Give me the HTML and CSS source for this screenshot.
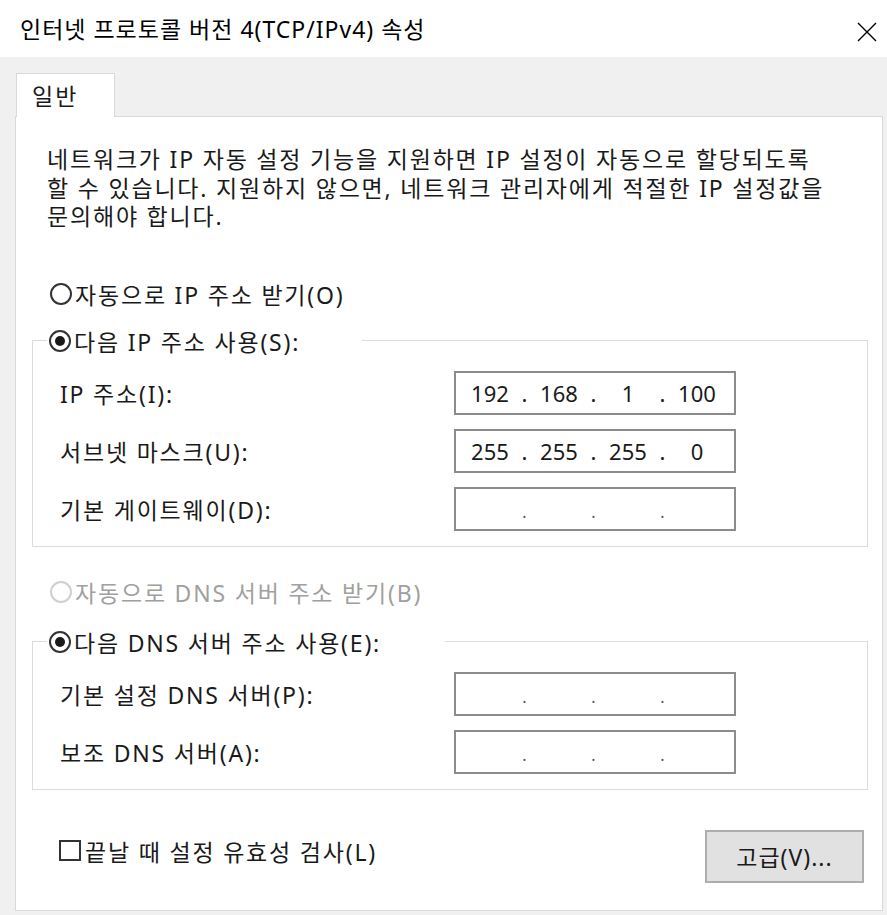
FILE: index.html
```html
<!DOCTYPE html>
<html lang="ko">
<head>
<meta charset="utf-8">
<title>인터넷 프로토콜 버전 4(TCP/IPv4) 속성</title>
<link rel="stylesheet" href="styles.css">
</head>
<body>
<div class="window">
  <header class="titlebar">
    <span class="title">인터넷 프로토콜 버전 4(TCP/IPv4) 속성</span>
    <button class="close" aria-label="닫기">
      <svg width="20" height="20" viewBox="0 0 20 20"><path d="M1 1 L19 19 M19 1 L1 19" stroke="#000" stroke-width="1.4" fill="none"/></svg>
    </button>
  </header>
  <main class="body">
    <div class="tabs"><div class="tab">일반</div></div>
    <section class="panel">
      <div class="desc">
        <p class="desc-line">네트워크가 IP 자동 설정 기능을 지원하면 IP 설정이 자동으로 할당되도록</p>
        <p class="desc-line">할 수 있습니다. 지원하지 않으면, 네트워크 관리자에게 적절한 IP 설정값을</p>
        <p class="desc-line">문의해야 합니다.</p>
      </div>

      <label class="radio-row first"><span class="radio"></span><span>자동으로 IP 주소 받기(O)</span></label>

      <fieldset class="group">
        <legend class="legend legend-ip"><span class="radio checked"></span><span>다음 IP 주소 사용(S):</span></legend>
        <div class="field-row">
          <span class="label">IP 주소(I):</span>
          <div class="ipbox"><span class="seg">192</span><span class="dot">.</span><span class="seg">168</span><span class="dot">.</span><span class="seg">1</span><span class="dot">.</span><span class="seg">100</span></div>
        </div>
        <div class="field-row">
          <span class="label">서브넷 마스크(U):</span>
          <div class="ipbox"><span class="seg">255</span><span class="dot">.</span><span class="seg">255</span><span class="dot">.</span><span class="seg">255</span><span class="dot">.</span><span class="seg">0</span></div>
        </div>
        <div class="field-row">
          <span class="label">기본 게이트웨이(D):</span>
          <div class="ipbox empty"><span class="seg"></span><span class="dot">.</span><span class="seg"></span><span class="dot">.</span><span class="seg"></span><span class="dot">.</span><span class="seg"></span></div>
        </div>
      </fieldset>

      <label class="radio-row disabled"><span class="radio"></span><span>자동으로 DNS 서버 주소 받기(B)</span></label>

      <fieldset class="group group-dns">
        <legend class="legend legend-dns"><span class="radio checked"></span><span>다음 DNS 서버 주소 사용(E):</span></legend>
        <div class="field-row">
          <span class="label">기본 설정 DNS 서버(P):</span>
          <div class="ipbox empty"><span class="seg"></span><span class="dot">.</span><span class="seg"></span><span class="dot">.</span><span class="seg"></span><span class="dot">.</span><span class="seg"></span></div>
        </div>
        <div class="field-row">
          <span class="label">보조 DNS 서버(A):</span>
          <div class="ipbox empty"><span class="seg"></span><span class="dot">.</span><span class="seg"></span><span class="dot">.</span><span class="seg"></span><span class="dot">.</span><span class="seg"></span></div>
        </div>
      </fieldset>

      <div class="bottom-row">
        <label class="check-row"><span class="checkbox"></span><span>끝날 때 설정 유효성 검사(L)</span></label>
        <button class="btn">고급(V)...</button>
      </div>
    </section>
  </main>
</div>
</body>
</html>
```

FILE: styles.css
```css
* { box-sizing: border-box; }
html, body { margin: 0; padding: 0; }
body {
  width: 887px;
  height: 915px;
  background: #f0f0f0;
  font-family: "Noto Sans", "Noto Sans CJK KR", sans-serif;
  color: #1a1a1a;
  font-size: 23px;
  letter-spacing: 1.8px;
  overflow: hidden;
}
.window { width: 887px; height: 915px; display: flex; flex-direction: column; }

.titlebar {
  height: 57px;
  background: #fff;
  display: flex;
  align-items: center;
  justify-content: space-between;
  padding: 0 10px 0 20px;
}
.title { font-size: 23px; letter-spacing: 1px; color: #000; padding-bottom: 2px; }
.close {
  border: 0; background: transparent; padding: 0;
  width: 20px; height: 20px; margin-top: 6px;
  display: flex;
}

.body { padding: 16px 4px 0 15px; }
.tabs { display: flex; padding-left: 1px; height: 43px; position: relative; z-index: 1; }
.tab {
  width: 99px;
  height: 44px;
  background: #fff;
  border: 1px solid #d9d9d9;
  border-bottom: 0;
  padding: 4px 0 0 15px;
  letter-spacing: 2px;
}
.panel {
  background: #fff;
  border: 1px solid #d9d9d9;
  height: 795px;
  width: 868px;
}

.desc {
  margin: 28px 0 0 31px;
  display: flex;
  flex-direction: column;
}
.desc-line {
  margin: 0;
  height: 28.5px;
  line-height: 28.5px;
  white-space: nowrap;
}

.radio-row, .legend, .check-row {
  display: flex;
  align-items: center;
  gap: 3px;
  height: 30px;
}
.radio-row { margin-left: 34px; }
.radio-row.first { margin-top: 48px; }
.radio {
  width: 22px; height: 22px;
  border: 2px solid #333;
  border-radius: 50%;
  display: inline-flex;
  align-items: center;
  justify-content: center;
  flex: none;
}
.radio.checked::after {
  content: "";
  width: 10px; height: 10px;
  border-radius: 50%;
  background: #1a1a1a;
}
.radio-row.disabled { color: #a0a0a0; margin-top: 30px; }
.radio-row.disabled .radio { border-color: #cfcfcf; }

.group {
  margin: 17px 14px 0 16px;
  padding: 15px 0 15px 27px;
  border: 1px solid #dcdcdc;
  display: flex;
  flex-direction: column;
  gap: 14px;
}
.group-dns { margin-top: 20px; }
.legend { padding: 0 0 0 2px; margin-left: -13px; }
.legend-ip { padding-right: 62px; }
.legend-dns { padding-right: 64px; }

.field-row {
  display: flex;
  align-items: center;
  justify-content: space-between;
  padding-right: 131px;
  height: 44px;
}
.ipbox {
  width: 282px;
  height: 44px;
  border: 2px solid #8c8c8c;
  display: flex;
  align-items: center;
  padding-left: 3px;
  font-size: 22px;
  letter-spacing: 0;
}
.seg { width: 62px; text-align: center; }
.dot { width: 7px; text-align: center; }
.empty .dot { font-size: 16px; padding-top: 6px; color: #555; }

.bottom-row {
  margin: 40px 18px 0 43px;
  display: flex;
  justify-content: space-between;
  align-items: center;
}
.check-row { gap: 4px; margin-top: -11px; }
.checkbox {
  width: 22px; height: 21px;
  border: 2px solid #333;
  flex: none;
}
.btn {
  width: 159px;
  height: 53px;
  background: #e1e1e1;
  border: 2px solid #adadad;
  font-family: inherit;
  font-size: 23px;
  letter-spacing: 1px;
  color: #1a1a1a;
  padding: 0;
}
```
